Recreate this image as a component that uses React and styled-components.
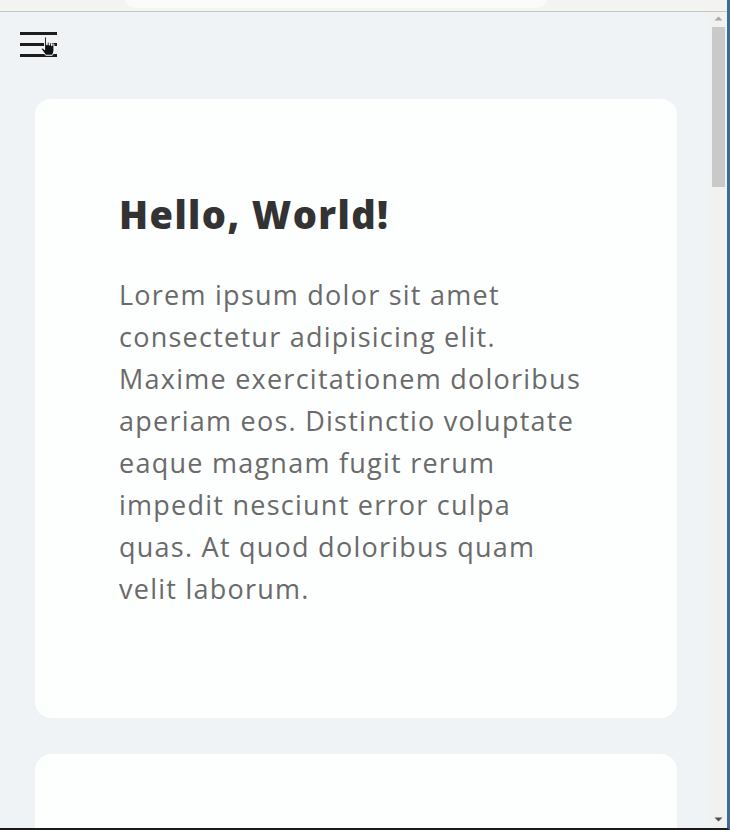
import React from "react";
import styled, { createGlobalStyle } from "styled-components";

const Global = createGlobalStyle`
  html, body { margin: 0; padding: 0; height: 100%; overflow: hidden; }
  body { font-family: "Open Sans", "Liberation Sans", sans-serif; background: #eff3f6; }
  #root { height: 830px; }
`;

const Frame = styled.div`
  width: 730px;
  height: 830px;
  display: flex;
  flex-direction: column;
  box-sizing: border-box;
  border-right: 3px solid #3f6b98;
  border-bottom: 2px solid #1b1b1b;
  background: #eff3f6;
  overflow: hidden;
`;

const TopStrip = styled.div`
  height: 11px;
  flex: none;
  background: #f3f4f1;
  border-bottom: 1px solid #c6c8c4;
  display: flex;
  justify-content: flex-start;
  padding-left: 125px;
`;

const AddressPill = styled.div`
  width: 422px;
  height: 20px;
  margin-top: -12px;
  background: #fbfcfa;
  border-radius: 12px;
`;

const Body = styled.div`
  flex: 1;
  display: flex;
  min-height: 0;
`;

const Viewport = styled.main`
  flex: 1;
  min-width: 0;
  overflow: hidden;
  background: #eff3f6;
  padding: 20px 33px 0 35px;
  box-sizing: border-box;
`;

const Nav = styled.nav`
  margin-left: -15px;
  height: 25px;
  display: flex;
  align-items: flex-start;
`;

const MenuButton = styled.button`
  position: relative;
  width: 37px;
  height: 25px;
  padding: 0;
  border: 0;
  background: transparent;
  display: flex;
  flex-direction: column;
  justify-content: space-between;
  cursor: pointer;
`;

const Bar = styled.span`
  display: block;
  width: 37px;
  height: 3px;
  background: #1c1c1c;
`;

const Cursor = styled.svg`
  position: absolute;
  left: 20px;
  top: 4px;
`;

const CardList = styled.div`
  display: flex;
  flex-direction: column;
  gap: 36px;
  margin-top: 42px;
`;

const Card = styled.section`
  background: #fdfefe;
  border-radius: 16px;
  height: ${(p) => p.$h}px;
  padding: 89px 84px 0 84px;
  box-sizing: border-box;
  flex: none;
`;

const Title = styled.h1`
  margin: 0;
  font-family: "Open Sans", "Liberation Sans", sans-serif;
  font-weight: 800;
  font-size: 38px;
  line-height: 52px;
  letter-spacing: 1.4px;
  color: #333333;
`;

const Text = styled.p`
  margin: 34px 0 0;
  font-size: 27px;
  line-height: 42px;
  letter-spacing: 1.25px;
  color: #6a6a6a;
  font-weight: 400;
`;

const ScrollTrack = styled.div`
  width: 17px;
  flex: none;
  background: #f1f1f0;
  display: flex;
  flex-direction: column;
  align-items: center;
  padding-top: 4px;
  box-sizing: border-box;
`;

const Arrow = styled.svg`
  flex: none;
  display: block;
`;

const Thumb = styled.div`
  width: 13px;
  height: 160px;
  margin-top: 6px;
  background: #c9c9c9;
`;

const Spacer = styled.div`
  flex: 1;
`;

export default function App() {
  return (
    <>
      <Global />
      <Frame>
        <TopStrip>
          <AddressPill />
        </TopStrip>
        <Body>
          <Viewport>
            <Nav>
              <MenuButton aria-label="menu">
                <Bar />
                <Bar />
                <Bar />
                <Cursor width="18" height="22" viewBox="0 0 16 20">
                  <path
                    d="M4 1.5 C4 0.7 5.8 0.7 5.8 1.5 L5.8 8 L6.4 8 L6.4 6 C6.4 5.2 8.1 5.2 8.1 6 L8.1 8.3 L8.6 8.3 L8.6 6.8 C8.6 6 10.3 6 10.3 6.8 L10.3 8.8 L10.8 8.8 L10.8 7.8 C10.8 7 12.5 7 12.5 7.8 L12.5 13 C12.5 15 11.5 16.5 11 17.5 L5 17.5 C4 16 2.5 14 1.3 12.3 C0.8 11.5 1.8 10.5 2.6 11.2 L4 12.6 Z"
                    fill="#111"
                    stroke="#fff"
                    strokeWidth="0.9"
                  />
                </Cursor>
              </MenuButton>
            </Nav>
            <CardList>
              <Card $h={619}>
                <Title>Hello, World!</Title>
                <Text>
                  Lorem ipsum dolor sit amet consectetur adipisicing elit. Maxime
                  exercitationem doloribus aperiam eos. Distinctio voluptate eaque
                  magnam fugit rerum impedit nesciunt error culpa quas. At quod
                  doloribus quam velit laborum.
                </Text>
              </Card>
              <Card $h={400} />
            </CardList>
          </Viewport>
          <ScrollTrack>
            <Arrow width="9" height="5" viewBox="0 0 9 5">
              <path d="M0.5 4.5 L4.5 0.5 L8.5 4.5 Z" fill="#a8a8a8" />
            </Arrow>
            <Thumb />
            <Spacer />
            <Arrow width="9" height="5" viewBox="0 0 9 5" style={{ marginBottom: 6 }}>
              <path d="M0.5 0.5 L8.5 0.5 L4.5 4.5 Z" fill="#505050" />
            </Arrow>
          </ScrollTrack>
        </Body>
      </Frame>
    </>
  );
}
